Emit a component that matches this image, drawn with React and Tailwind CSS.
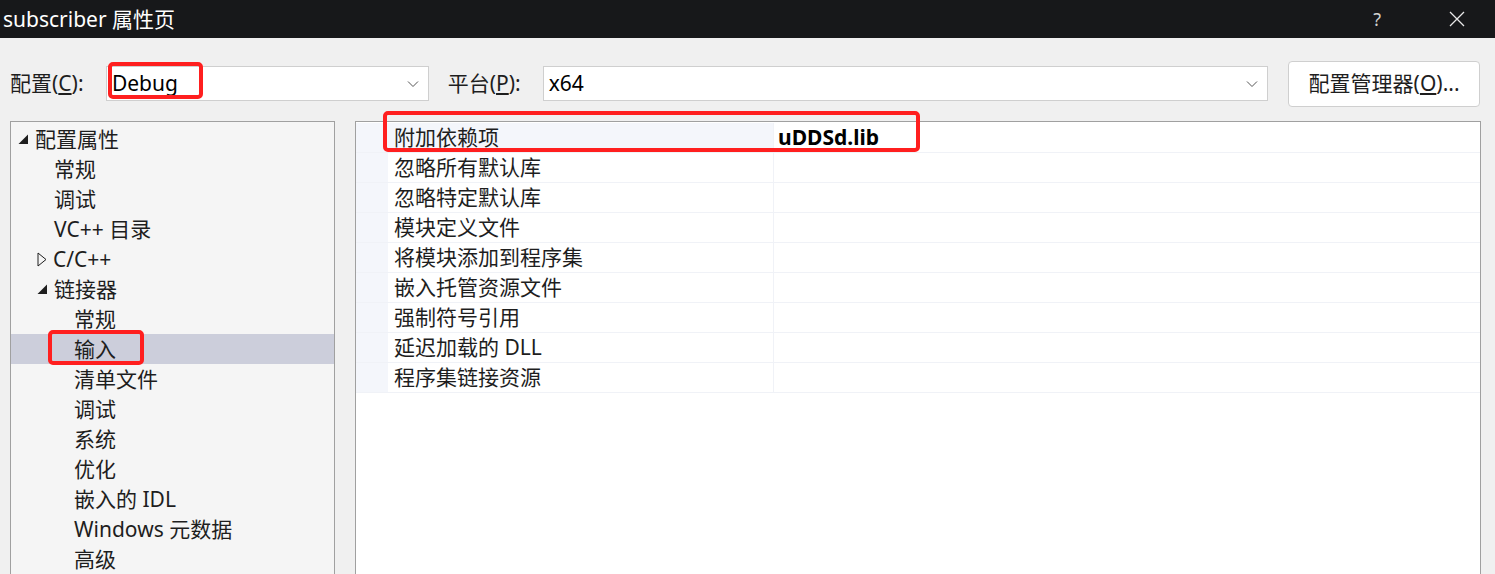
import React from "react";

const FONT = { fontFamily: '"Noto Sans", "Noto Sans CJK SC", sans-serif' };

function Chevron() {
  return (
    <svg width="12" height="8" viewBox="0 0 12 8" className="shrink-0">
      <path d="M1 1.5 L6 6.5 L11 1.5" fill="none" stroke="#555" strokeWidth="1" />
    </svg>
  );
}

function Combo({ value, className }) {
  return (
    <div
      className={
        "flex h-[35px] items-center justify-between border border-[#cfcfcf] bg-white pl-[5px] pr-[9px] " +
        className
      }
    >
      <span className="text-[21px] leading-none text-black">{value}</span>
      <Chevron />
    </div>
  );
}

function TreeRow({ indent, arrow, label, selected }) {
  return (
    <div
      className={
        "flex h-[30px] items-center " + (selected ? "bg-[#cccedb]" : "")
      }
      style={{ paddingLeft: indent }}
    >
      {arrow === "open" && (
        <svg width="11" height="11" viewBox="0 0 11 11" className="mr-[6px]">
          <path d="M10 0.5 L10 10 L0.5 10 Z" fill="#1e1e1e" />
        </svg>
      )}
      {arrow === "closed" && (
        <svg width="10" height="15" viewBox="0 0 10 15" className="mr-[6px]">
          <path d="M1 1 L9 7.5 L1 14 Z" fill="none" stroke="#1e1e1e" strokeWidth="1" />
        </svg>
      )}
      <span className="text-[21px] leading-none text-[#1e1e1e]">{label}</span>
    </div>
  );
}

const tree = [
  { indent: 7, arrow: "open", label: "配置属性" },
  { indent: 43, label: "常规" },
  { indent: 43, label: "调试" },
  { indent: 43, label: "VC++ 目录" },
  { indent: 26, arrow: "closed", label: "C/C++" },
  { indent: 26, arrow: "open", label: "链接器" },
  { indent: 63, label: "常规" },
  { indent: 63, label: "输入", selected: true },
  { indent: 63, label: "清单文件" },
  { indent: 63, label: "调试" },
  { indent: 63, label: "系统" },
  { indent: 63, label: "优化" },
  { indent: 63, label: "嵌入的 IDL" },
  { indent: 63, label: "Windows 元数据" },
  { indent: 63, label: "高级" },
];

const props = [
  ["附加依赖项", "uDDSd.lib"],
  ["忽略所有默认库", ""],
  ["忽略特定默认库", ""],
  ["模块定义文件", ""],
  ["将模块添加到程序集", ""],
  ["嵌入托管资源文件", ""],
  ["强制符号引用", ""],
  ["延迟加载的 DLL", ""],
  ["程序集链接资源", ""],
];

export default function App() {
  return (
    <div
      className="relative flex h-[574px] w-[1495px] flex-col overflow-hidden bg-[#f0f0f0]"
      style={FONT}
    >
      {/* title bar */}
      <div className="flex h-[38px] shrink-0 items-center justify-between bg-[#17181a] pl-[3px]">
        <span className="text-[21px] leading-none text-white">subscriber 属性页</span>
        <div className="flex items-center">
          <span className="mr-[68px] text-[18px] text-[#d0d0d0]">?</span>
          <svg width="16" height="16" viewBox="0 0 16 16" className="mr-[30px]">
            <path d="M1 1 L15 15 M15 1 L1 15" stroke="#e8e8e8" strokeWidth="1.3" />
          </svg>
        </div>
      </div>

      {/* config row */}
      <div className="flex h-[83px] shrink-0 items-center pl-[10px] pr-[15px] pt-[8px]">
        <span className="w-[96px] text-[21px] leading-none text-[#1e1e1e]">
          配置(<span className="underline underline-offset-2">C</span>):
        </span>
        <Combo value="Debug" className="w-[323px]" />
        <span className="ml-[19px] w-[95px] text-[21px] leading-none text-[#1e1e1e]">
          平台(<span className="underline underline-offset-2">P</span>):
        </span>
        <Combo value="x64" className="w-[726px]" />
        <button className="ml-[20px] flex h-[46px] w-[192px] items-center justify-center rounded-[4px] border border-[#cfcfcf] bg-white text-[21px] leading-none text-[#1e1e1e]">
          配置管理器(<span className="underline underline-offset-2">O</span>)...
        </button>
      </div>

      {/* panels */}
      <div className="flex min-h-0 flex-1 gap-[20px] pl-[10px] pr-[14px]">
        <div className="w-[325px] shrink-0 border border-b-0 border-[#a0a0a0] bg-[#f5f5f5] pt-[2px]">
          {tree.map((t, i) => (
            <TreeRow key={i} {...t} />
          ))}
        </div>
        <div className="flex flex-1 flex-col border border-b-0 border-[#a0a0a0] bg-white pt-[1px]">
          {props.map(([name, value], i) => (
            <div key={i} className="flex h-[30px] border-b border-[#f0f2f7]">
              <div className="w-[32px] shrink-0 bg-[#f4f6fb]" />
              <div
                className={
                  "flex w-[386px] shrink-0 items-center border-r border-[#f0f2f7] pl-[6px] " +
                  (i === 0 ? "bg-[#f4f6fb]" : "")
                }
              >
                <span className="text-[21px] leading-none text-[#1e1e1e]">{name}</span>
              </div>
              <div className="flex flex-1 items-center pl-[4px]">
                <span className="text-[21px] font-bold leading-none text-black">{value}</span>
              </div>
            </div>
          ))}
        </div>
      </div>

      {/* red annotation boxes */}
      <div className="pointer-events-none absolute left-[108px] top-[62px] h-[37px] w-[95px] rounded-[5px] border-[4px] border-[#ff1f1f]" />
      <div className="pointer-events-none absolute left-[48px] top-[330px] h-[35px] w-[96px] rounded-[5px] border-[4px] border-[#ff1f1f]" />
      <div className="pointer-events-none absolute left-[383px] top-[111px] h-[41px] w-[537px] rounded-[5px] border-[4px] border-[#ff1f1f]" />
    </div>
  );
}
